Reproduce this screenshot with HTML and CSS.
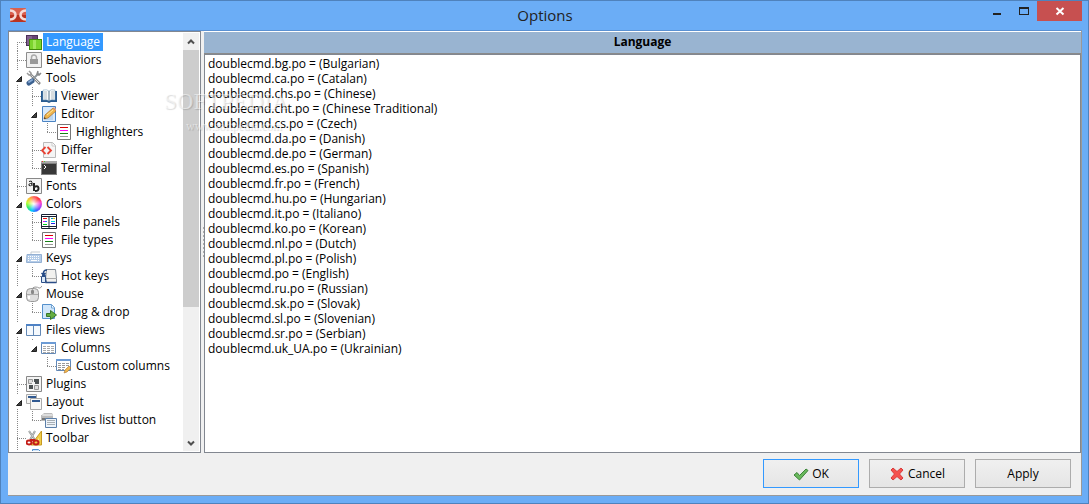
FILE: index.html
```html
<!DOCTYPE html>
<html lang="en">
<head>
    <meta charset="utf-8">
    <title>Options</title>
    <meta name="viewport" content="width=device-width, initial-scale=1">
    <link rel="stylesheet" href="styles.css">
</head>
<body>
    <header class="titlebar">
        <svg class="app-icon" width="16" height="16" viewBox="0 0 16 16">
            <rect y="1" width="16" height="14" rx="1" fill="#d9604f"/>
            <path d="M0 8h16v6l-1 1H1l-1-1z" fill="#b93422"/>
            <path d="M0 3.500Q5.500 4 5.500 8T0 12.500" fill="none" stroke="#f6dcd8" stroke-width="2.500"/>
            <path d="M16 3.500Q10.500 4 10.500 8t5.500 4.500" fill="none" stroke="#f6dcd8" stroke-width="2.500"/>
        </svg>
        <h1>Options</h1>
        <div class="window-buttons">
            <button type="button" aria-label="Minimize"><svg width="10" height="10" viewBox="0 0 10 10"><path d="M1 7h8v2H1z" fill="#222"/></svg></button>
            <button type="button" aria-label="Maximize"><svg width="10" height="10" viewBox="0 0 10 10"><path d="M0 1h10v8H0zM1 3v5h8V3z" fill="#222" fill-rule="evenodd"/></svg></button>
            <button type="button" class="close" aria-label="Close"><svg width="10" height="10" viewBox="0 0 10 10"><path d="M1.500 2l7 6.500M8.500 2l-7 6.500" stroke="#fff" stroke-width="2"/></svg></button>
        </div>
    </header>

    <main class="client">
        <div class="panes">
            <nav class="tree-pane">
                <ul class="tree">
                    <li class="first">
                        <div class="row selected">
                            <svg class="icon" viewBox="0 0 16 16"><path d="M0 1h12v11H0z" fill="#4c2f59"/><path d="M1 2h5v9H1z" fill="#80628d"/><path d="M6 2h5v5H6z" fill="#684574"/><path d="M3 5h13v11H3z" fill="#418b0b"/><path d="M4 6h11v9H4z" fill="#7bd42d"/><path d="M7 6h3v9H7z" fill="#a2e75c"/></svg>
                            <span>Language</span>
                        </div>
                    </li>
                    <li>
                        <div class="row">
                            <svg class="icon" viewBox="0 0 16 16"><path d="M.5.5h15v15H.5z" fill="#f1f1f1" stroke="#8c8c8c"/><path d="M5.500 8V5.500a2.500 2.500 0 0 1 5 0V8" fill="none" stroke="#aaa" stroke-width="1.500"/><path d="M4 7h8v5H4z" fill="#999"/></svg>
                            <span>Behaviors</span>
                        </div>
                    </li>
                    <li>
                        <div class="row">
                            <svg class="arrow" viewBox="0 0 6 6"><path d="M5.500.5v5h-5z"/></svg>
                            <svg class="icon" viewBox="0 0 16 16"><path d="M4 4l10 10" stroke="#888" stroke-width="2.500"/><path d="M4 4l9 9" stroke="#e4e4e4"/><path d="M1 3l2 2h2V3L3 1" stroke="#999" stroke-width="1.500" fill="none"/><path d="M13 3L7 9" stroke="#8e979c" stroke-width="2"/><path d="M12 1l-1 3 2 1 2-2" fill="none" stroke="#888" stroke-width="1.500"/><path d="M6 11l-3 2" stroke="#3b608f" stroke-width="5" stroke-linecap="round"/><path d="M6 10l-3 2" stroke="#86a8d2" stroke-width="2" stroke-linecap="round"/></svg>
                            <span>Tools</span>
                        </div>
                        <ul>
                            <li>
                                <div class="row">
                                    <svg class="icon" viewBox="0 0 16 16"><path d="M0 3h16v11h-6l-2 1-2-1H0z" fill="#285b91"/><path d="M2 2q4-1 6 1 2-2 6-1v10q-4-1-6 1-2-2-6-1z" fill="#f8fbfc" stroke="#789db7" stroke-width=".5"/><path d="M8 3v10" stroke="#547186"/><path d="M3 4h3M3 6h3M3 8h3M3 10h3M10 4h3M10 6h3M10 8h3M10 10h3" stroke="#b7c0c5"/></svg>
                                    <span>Viewer</span>
                                </div>
                            </li>
                            <li>
                                <div class="row">
                                    <svg class="arrow" viewBox="0 0 6 6"><path d="M5.500.5v5h-5z"/></svg>
                                    <svg class="icon" viewBox="0 0 16 16"><path d="M1.500.5h13v15h-13z" fill="#d8eafd" stroke="#4a83c3"/><path d="M4 9h8M4 11h8M4 13h8" stroke="#9fc2e4"/><path d="M3 13l1-4 8-7 3 3-8 7z" fill="#efb64e" stroke="#a86b28" stroke-width=".7"/><path d="M12 2l1-1 2 2v2z" fill="#e59b84"/><path d="M6 9l6-5" stroke="#ffe79b"/><path d="M3 13l.5-2 1.500 1.500z" fill="#333"/></svg>
                                    <span>Editor</span>
                                </div>
                                <ul>
                                    <li>
                                        <div class="row">
                                            <svg class="icon" viewBox="0 0 16 16"><path d="M1.500.5h13v15h-13z" fill="#fff" stroke="#777"/><path d="M4 3.500h8" stroke="#d00"/><path d="M4 6.500h8" stroke="#f0f"/><path d="M4 9.500h8" stroke="#168016"/><path d="M4 12.500h8" stroke="#999"/></svg>
                                            <span>Highlighters</span>
                                        </div>
                                    </li>
                                </ul>
                            </li>
                            <li>
                                <div class="row">
                                    <svg class="icon" viewBox="0 0 16 16"><path d="M2.500.5h9l3 3v12h-12z" fill="#f5f5f5" stroke="#bbb"/><path d="M11 1v3h3" fill="#fff" stroke="#ccc"/><path d="M4.500 5L1 8.500 4.500 12M6.500 5L10 8.500 6.500 12" fill="none" stroke="#e94335" stroke-width="1.800"/></svg>
                                    <span>Differ</span>
                                </div>
                            </li>
                            <li>
                                <div class="row">
                                    <svg class="icon" viewBox="0 0 16 16"><path d="M0 1h16v14H0z" fill="#828282"/><path d="M1 4h14v10H1z" fill="#383838"/><path d="M0 1h16v2H0z" fill="#aaa"/><path d="M1 1h1v1H1z" fill="#e32"/><path d="M3 1h1v1H3z" fill="#5c3"/><path d="M3 5l2 2-2 2" fill="none" stroke="#fff"/></svg>
                                    <span>Terminal</span>
                                </div>
                            </li>
                        </ul>
                    </li>
                    <li>
                        <div class="row">
                            <svg class="icon" viewBox="0 0 16 16"><path d="M.5.5h15v15H.5z" fill="#f4f4f4" stroke="#888"/><path d="M3 3.500q3-1.500 3 1V8M6 5.500H4.500Q2 6 3 7.500q1.500 1 3-1" fill="none" stroke="#222"/><path d="M8 5v8M8 9q4-2 4.500 1T9 13" fill="none" stroke="#222" stroke-width="2"/></svg>
                            <span>Fonts</span>
                        </div>
                    </li>
                    <li>
                        <div class="row">
                            <svg class="arrow" viewBox="0 0 6 6"><path d="M5.500.5v5h-5z"/></svg>
                            <i class="icon color-wheel"></i>
                            <span>Colors</span>
                        </div>
                        <ul>
                            <li>
                                <div class="row">
                                    <svg class="icon" viewBox="0 0 16 16"><path d="M.5.5h15v14H.5z" fill="#fff" stroke="#172032"/><path d="M0 2.500h16M8 2v12M0 12.500h16" stroke="#172032"/><path d="M2 4.500h4" stroke="#e11"/><path d="M2 7.500h2" stroke="#e0e"/><path d="M4 7.500h2" stroke="#27f"/><path d="M2 10.500h4" stroke="#0c2"/><path d="M10 4.500h2" stroke="#09c"/><path d="M12 4.500h2" stroke="#eb0"/><path d="M10 7.500h4" stroke="#0dd"/><path d="M10 9.500h4" stroke="#22e"/></svg>
                                    <span>File panels</span>
                                </div>
                            </li>
                            <li>
                                <div class="row">
                                    <svg class="icon" viewBox="0 0 16 16"><path d="M1.500.5h13v15h-13z" fill="#fff" stroke="#777"/><path d="M4 3.500h8" stroke="#d00"/><path d="M4 6.500h8" stroke="#f0f"/><path d="M4 9.500h8" stroke="#168016"/><path d="M4 12.500h8" stroke="#999"/></svg>
                                    <span>File types</span>
                                </div>
                            </li>
                        </ul>
                    </li>
                    <li>
                        <div class="row">
                            <svg class="arrow" viewBox="0 0 6 6"><path d="M5.500.5v5h-5z"/></svg>
                            <svg class="icon" viewBox="0 0 16 16"><path d="M1 4.500h14.500v8H.5z" fill="#b5cde9" stroke="#94b0d3"/><path d="M5 4V2h9" fill="none" stroke="#c4cbd1"/><path d="M2 6.500h12M2 8.500h12M2 10.500h2M12 10.500h2" stroke="#fff" stroke-dasharray="1 1"/><path d="M5 10.500h6" stroke="#fff"/></svg>
                            <span>Keys</span>
                        </div>
                        <ul>
                            <li>
                                <div class="row">
                                    <svg class="icon" viewBox="0 0 16 16"><path d="M5.500 1.500h9l1 9v4h-10l-1-3z" fill="#f1f1ef" stroke="#879099"/><path d="M4.500 10.500h11" stroke="#aaa"/><path d="M1 7.500h3l1 7h10.500" fill="none" stroke="#2b4e87" stroke-width="1.500"/><path d="M6 2Q2 2 2.500 6M.5 5l2 2 2-2" fill="none" stroke="#254b87" stroke-width="1.500"/><path d="M.5 8.500h4v6h-4z" fill="#dae8f7" stroke="#2b4e87"/></svg>
                                    <span>Hot keys</span>
                                </div>
                            </li>
                        </ul>
                    </li>
                    <li>
                        <div class="row">
                            <svg class="arrow" viewBox="0 0 6 6"><path d="M5.500.5v5h-5z"/></svg>
                            <svg class="icon" viewBox="0 0 16 16"><path d="M7 4Q6 1 9 1t4 1 3-2" fill="none" stroke="#999"/><rect x=".5" y="2.500" width="12" height="13" rx="4" fill="#dedede" stroke="#999"/><path d="M1 8.500h11M6.500 3v5" stroke="#aaa"/><rect x="5" y="4" width="3" height="4" rx="1" fill="#888"/><path d="M3 10v3" stroke="#fff" stroke-width="2"/></svg>
                            <span>Mouse</span>
                        </div>
                        <ul>
                            <li>
                                <div class="row">
                                    <svg class="icon" viewBox="0 0 16 16"><path d="M1.500.5h9l3 3v11h-12z" fill="#d1e6fa" stroke="#5490cc"/><path d="M10.500 1v3h3" fill="#fff" stroke="#73a4d3"/><path d="M5.500 9.500h4v-3l6 4.500-6 4.500v-3h-4z" fill="#65ae42" stroke="#38752a"/></svg>
                                    <span>Drag &amp; drop</span>
                                </div>
                            </li>
                        </ul>
                    </li>
                    <li>
                        <div class="row">
                            <svg class="arrow" viewBox="0 0 6 6"><path d="M5.500.5v5h-5z"/></svg>
                            <svg class="icon" viewBox="0 0 16 16"><path d="M.5 2.500h14v11H.5z" fill="#f5f9fd" stroke="#6388b5"/><path d="M0 2h15v2H0z" fill="#4e82c5"/><path d="M7.500 4v9" stroke="#6388b5"/></svg>
                            <span>Files views</span>
                        </div>
                        <ul>
                            <li>
                                <div class="row">
                                    <svg class="arrow" viewBox="0 0 6 6"><path d="M5.500.5v5h-5z"/></svg>
                                    <svg class="icon" viewBox="0 0 16 16"><path d="M.5 2.500h14v11H.5z" fill="#fff" stroke="#6388b5"/><path d="M0 2h15v2H0z" fill="#6c9bd5"/><path d="M2 6.500h3M6 6.500h3M10 6.500h3M2 8.500h3M6 8.500h3M10 8.500h3M2 10.500h3M6 10.500h3M10 10.500h3M2 12.500h3M6 12.500h3M10 12.500h3" stroke="#aaa"/></svg>
                                    <span>Columns</span>
                                </div>
                                <ul>
                                    <li>
                                        <div class="row">
                                            <svg class="icon" viewBox="0 0 16 16"><path d="M.5 1.500h14v11H.5z" fill="#fff" stroke="#6388b5"/><path d="M0 1h15v2H0z" fill="#6c9bd5"/><path d="M2 5.500h3M6 5.500h3M10 5.500h3M2 7.500h3M6 7.500h3M10 7.500h3M2 9.500h3M6 9.500h3M2 11.500h3M6 11.500h2" stroke="#999"/><path d="M8 15l1-3 4-4 2 2-4 4z" fill="#efb74c" stroke="#af7632" stroke-width=".6"/></svg>
                                            <span>Custom columns</span>
                                        </div>
                                    </li>
                                </ul>
                            </li>
                        </ul>
                    </li>
                    <li>
                        <div class="row">
                            <svg class="icon" viewBox="0 0 16 16"><path d="M.5.5h15v15H.5z" fill="#f4f4f4" stroke="#888"/><path d="M2.500 3.500h4v4h-4zM8.500 9.500h4v4h-4z" fill="#ddd" stroke="#999"/><path d="M8 3h5v5H8zM3 9h4v4H3z" fill="#4b5153"/><path d="M6 6h3v3H6z" fill="#f4f4f4"/></svg>
                            <span>Plugins</span>
                        </div>
                    </li>
                    <li>
                        <div class="row">
                            <svg class="arrow" viewBox="0 0 6 6"><path d="M5.500.5v5h-5z"/></svg>
                            <svg class="icon" viewBox="0 0 16 16"><path d="M.5.5h10v9H.5z" fill="#f4f4f2" stroke="#aaa"/><path d="M2 2h8v2H2z" fill="#315a91"/><path d="M4.500 4.500h11v11h-11z" fill="#f8f8f6" stroke="#aaa"/><path d="M6 6h8v2H6z" fill="#315a91"/></svg>
                            <span>Layout</span>
                        </div>
                        <ul>
                            <li>
                                <div class="row">
                                    <svg class="icon" viewBox="0 0 16 16"><path d="M1 3l2-2h8l1 2v6H0V3z" fill="#bbb"/><path d="M2 2h9l1 2H1z" fill="#ddd"/><path d="M1 6h9v2H1z" fill="#777"/><path d="M4.500 6.500h11v9h-11z" fill="#eef4fa" stroke="#5b7fa9"/><path d="M6 8.500h8M6 10.500h8M6 12.500h8" stroke="#a8afb5"/></svg>
                                    <span>Drives list button</span>
                                </div>
                            </li>
                        </ul>
                    </li>
                    <li>
                        <div class="row">
                            <svg class="icon" viewBox="0 0 16 16"><path d="M15.500 1v14H5z" fill="#f1ce49" stroke="#c79a22"/><path d="M13 8v4h-3z" fill="#fff0a0"/><path d="M3 1l6 9M9 1L4 10" stroke="#8b9191" stroke-width="2"/><path d="M3 1l6 9M9 1L4 10" stroke="#ddd" stroke-width=".7"/><ellipse cx="3" cy="12.500" rx="2.500" ry="2" fill="none" stroke="#c41e18" stroke-width="2"/><ellipse cx="10" cy="12.500" rx="2.500" ry="2" fill="none" stroke="#c41e18" stroke-width="2"/><path d="M4 10h5" stroke="#c41e18" stroke-width="2"/></svg>
                            <span>Toolbar</span>
                        </div>
                    </li>
                    <li>
                        <div class="row">
                            <svg class="icon" viewBox="0 0 16 16"><path d="M6.500 1.500h6l3 3v11h-9z" fill="#d1e6fa" stroke="#5490cc"/></svg>
                        </div>
                    </li>
                </ul>
                <div class="scrollbar">
                    <button type="button" aria-label="Scroll up"><svg width="8" height="8" viewBox="0 0 8 8"><path d="M1 5.500l3-3 3 3"/></svg></button>
                    <div class="track"><div class="thumb"></div></div>
                    <button type="button" aria-label="Scroll down"><svg width="8" height="8" viewBox="0 0 8 8"><path d="M1 2.500l3 3 3-3"/></svg></button>
                </div>
            </nav>
            <div class="splitter"></div>
            <section class="page">
                <h2><label for="languages">Language</label></h2>
                <select id="languages" size="20">
                    <option>doublecmd.bg.po = (Bulgarian)</option>
                    <option>doublecmd.ca.po = (Catalan)</option>
                    <option>doublecmd.chs.po = (Chinese)</option>
                    <option>doublecmd.cht.po = (Chinese Traditional)</option>
                    <option>doublecmd.cs.po = (Czech)</option>
                    <option>doublecmd.da.po = (Danish)</option>
                    <option>doublecmd.de.po = (German)</option>
                    <option>doublecmd.es.po = (Spanish)</option>
                    <option>doublecmd.fr.po = (French)</option>
                    <option>doublecmd.hu.po = (Hungarian)</option>
                    <option>doublecmd.it.po = (Italiano)</option>
                    <option>doublecmd.ko.po = (Korean)</option>
                    <option>doublecmd.nl.po = (Dutch)</option>
                    <option>doublecmd.pl.po = (Polish)</option>
                    <option>doublecmd.po = (English)</option>
                    <option>doublecmd.ru.po = (Russian)</option>
                    <option>doublecmd.sk.po = (Slovak)</option>
                    <option>doublecmd.sl.po = (Slovenian)</option>
                    <option>doublecmd.sr.po = (Serbian)</option>
                    <option>doublecmd.uk_UA.po = (Ukrainian)</option>
                </select>
            </section>
            <div class="watermark">SOFTPEDIA<small>www.softpedia.com</small></div>
        </div>
        <footer class="actions">
            <button type="button" class="default"><svg width="16" height="16" viewBox="0 0 16 16"><path d="M1 9l3-2.500 2.500 3L13 3l2 1.500L6.500 14z" fill="#69b85c" stroke="#3c8439"/></svg>OK</button>
            <button type="button"><svg width="16" height="16" viewBox="0 0 16 16"><path d="M2 4l2-2 4 3.500L12 2l2 2-3.500 4 3.500 4-2 2-4-3.500L4 14l-2-2 3.500-4z" fill="#f5514d" stroke="#d93b3b"/></svg>Cancel</button>
            <button type="button">Apply</button>
        </footer>
    </main>
</body>
</html>
```
FILE: styles.css
```css
* {
    box-sizing: border-box;
}

body {
    display: flex;
    flex-direction: column;
    height: 100vh;
    margin: 0;
    padding: 0 6px 7px 7px;
    border: 1px solid #4f82bc;
    background: #6badf6;
    color: #000;
    font-family: "Open Sans", "Noto Sans", sans-serif;
    font-size: 12px;
}

button {
    padding: 0;
    border: 0;
    background: none;
    font: inherit;
}

.titlebar {
    display: grid;
    grid-template-columns: 1fr auto 1fr;
    height: 29px;
}

.app-icon {
    margin: 6px 2px;
}

.titlebar h1 {
    margin: 0;
    color: #222;
    font-size: 15px;
    font-weight: 400;
    line-height: 29px;
}

.window-buttons {
    display: flex;
    justify-content: flex-end;
    height: 20px;
}

.window-buttons button {
    width: 27px;
}

.window-buttons .close {
    width: 45px;
    background: #c75050;
}

.client {
    display: flex;
    flex: 1;
    flex-direction: column;
    min-height: 0;
    border: 1px solid #999;
    border-top-color: #5a91d3;
    border-left: 0;
    background: #f0f0f0;
}

.panes {
    position: relative;
    display: flex;
    flex: 1;
    min-height: 0;
}

/* Tree */

.tree-pane {
    display: flex;
    width: 193px;
    padding: 1px 1px 1px 0;
    border: 1px solid #828790;
    background: #fff;
}

.tree {
    flex: 1;
    overflow: hidden;
}

.tree,
.tree ul {
    margin: 0;
    padding: 0;
    list-style: none;
}

.tree ul {
    padding-left: 15px;
}

.tree li {
    background: repeating-linear-gradient(#888 0 1px, transparent 1px 2px) 8px 0 / 1px 100% no-repeat;
}

.tree li.first {
    background-position: 8px 9px;
}

.tree ul li:last-child {
    background-size: 1px 10px;
}

.row {
    display: flex;
    align-items: center;
    height: 18px;
    padding-left: 17px;
    background: repeating-linear-gradient(90deg, #888 0 1px, transparent 1px 2px) 8px 9px / 9px 1px no-repeat;
    white-space: nowrap;
}

.row span {
    height: 18px;
    margin-left: 1px;
    padding: 0 3px;
    line-height: 18px;
}

.selected span {
    background: #39f;
    color: #fff;
}

.icon {
    flex: none;
    width: 16px;
    height: 16px;
}

.arrow {
    width: 13px;
    height: 14px;
    margin-left: -13px;
    padding: 5px 4px 3px 3px;
    background: #fff;
    fill: #404040;
    stroke: #222;
}

.color-wheel {
    border-radius: 50%;
    background: radial-gradient(circle, #fff, transparent 60%), conic-gradient(#f66, #f33, #f4c, #94f, #36f, #0cf, #3e6, #bf3, #fb3, #f66);
}

.scrollbar {
    display: flex;
    flex-direction: column;
    width: 16px;
    background: #f0f0f0;
}

.scrollbar button {
    height: 17px;
}

.scrollbar svg {
    fill: none;
    stroke: #505050;
    stroke-width: 2;
}

.track {
    flex: 1;
}

.thumb {
    height: 67%;
    background: #cdcdcd;
}

.splitter {
    display: flex;
    align-items: center;
    width: 3px;
}

.splitter::after {
    width: 1px;
    height: 30px;
    margin-left: 2px;
    background: repeating-linear-gradient(#aaa 0 2px, transparent 2px 4px);
    content: "";
}

/* Page */

.page {
    display: flex;
    flex: 1;
    flex-direction: column;
    min-width: 0;
}

.page h2 {
    height: 23px;
    margin: 0;
    border-top: 1px solid #fff;
    border-bottom: 1px solid #8a8a8a;
    background: #99b4d1;
    font-size: 12px;
    font-weight: 700;
    line-height: 20px;
    text-align: center;
}

select {
    flex: 1;
    min-height: 0;
    padding: 0 1px;
    border: 1px solid #828790;
    border-radius: 0;
    outline: 0;
    background: #fff;
    color: #000;
    font: inherit;
    overflow: hidden;
}

option {
    height: 15px;
    min-height: 15px;
    padding: 0 2px;
    line-height: 15px;
}

.watermark {
    position: absolute;
    top: 59px;
    left: 156px;
    color: rgba(255, 255, 255, 0.5);
    font-family: "Liberation Serif", serif;
    font-size: 23px;
    line-height: 24px;
    text-shadow: 1px 1px 1px rgba(0, 0, 0, 0.15);
    pointer-events: none;
}

.watermark small {
    display: block;
    padding-left: 22px;
    font-size: 12px;
}

/* Buttons */

.actions {
    display: flex;
    justify-content: flex-end;
    gap: 10px;
    padding: 6px 10px 7px;
}

.actions button {
    display: flex;
    align-items: center;
    justify-content: center;
    gap: 3px;
    width: 96px;
    height: 29px;
    border: 1px solid #acacac;
    background: linear-gradient(#f0f0f0, #e5e5e5);
}

.actions .default {
    border-color: #39f;
}
```
